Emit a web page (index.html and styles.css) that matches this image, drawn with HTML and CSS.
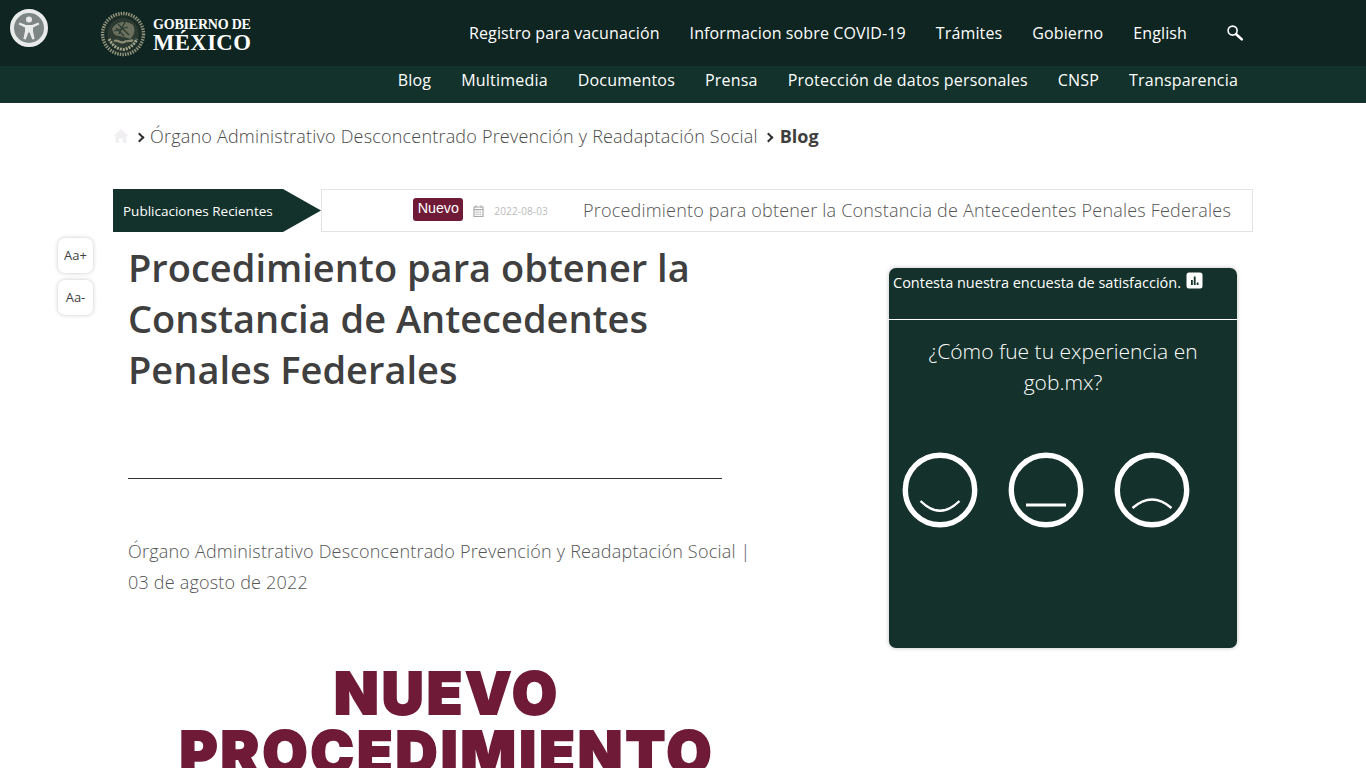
FILE: index.html
```html
<!DOCTYPE html>
<html lang="es">
<head>
    <meta charset="utf-8" />
    <title>Procedimiento para obtener la Constancia de Antecedentes Penales Federales</title>
    <link rel="stylesheet" href="styles.css">
</head>
<body>
<a class="accessBtn" href="#">
    <svg width="38" height="38" viewBox="0 0 38 38">
        <circle cx="19" cy="19" r="17" fill="#7d8684" stroke="#e9ebeb" stroke-width="4"/>
        <circle cx="19" cy="10.5" r="3" fill="#e9ebeb"/>
        <path d="M9.5 13.5 L16 16 H22 L28.5 13.5 L29.3 15.6 L23 18.6 V22 L24.6 30 L22.3 30.6 L19.6 23.5 H18.4 L15.7 30.6 L13.4 30 L15 22 V18.6 L8.7 15.6 Z" fill="#e9ebeb"/>
    </svg>
</a>

<header>
    <div class="topBar">
        <a class="logo" href="#">
            <svg class="emblem" width="46" height="46" viewBox="0 0 46 46">
                <circle cx="23" cy="23" r="20.5" fill="#1b2c27" stroke="#92947e" stroke-width="3.4" stroke-dasharray="1.5 1.1"/>
                <circle cx="23" cy="22.5" r="15.5" fill="#2c3a31"/>
                <path d="M12 18 C16 10 27 9 33 14 C36 19 34 25 30 28 C24 25 18 26 14 23 Z" fill="#6a705d"/>
                <path d="M18 13 L29 24 M25 11 L19 23 M14 20 L28 16 M16 17 L24 25" stroke="#2b3a30" stroke-width="1.3" fill="none"/>
                <path d="M9 28 C12 34 17 38 23 38.5 C29 38 34 34 37 28" fill="none" stroke="#a3a48c" stroke-width="3" stroke-dasharray="2 1"/>
                <path d="M14 30 C18 28 20 33 24 31 C27 29 30 31 33 29" fill="none" stroke="#8d8e78" stroke-width="2.2"/>
            </svg>
            <span class="logoText">
                <span class="logoSmall">GOBIERNO DE</span>
                <span class="logoBig">MÉXICO</span>
            </span>
        </a>
        <nav class="mainNav">
            <a href="#">Registro para vacunación</a>
            <a href="#">Informacion sobre COVID-19</a>
            <a href="#">Trámites</a>
            <a href="#">Gobierno</a>
            <a href="#">English</a>
            <a class="searchLink" href="#">
                <svg width="18" height="18" viewBox="0 0 18 18">
                    <circle cx="6.6" cy="6.6" r="4.5" fill="none" stroke="#fff" stroke-width="1.6"/>
                    <path d="M10.2 10.2 L15.8 15.4" stroke="#fff" stroke-width="2.6" stroke-linecap="round"/>
                </svg>
            </a>
        </nav>
    </div>
    <div class="subBar">
        <nav class="subNav">
            <a href="#">Blog</a>
            <a href="#">Multimedia</a>
            <a href="#">Documentos</a>
            <a href="#">Prensa</a>
            <a href="#">Protección de datos personales</a>
            <a href="#">CNSP</a>
            <a href="#">Transparencia</a>
        </nav>
    </div>
</header>

<div class="fontBtns">
    <button class="fontBtn">Aa+</button>
    <button class="fontBtn">Aa-</button>
</div>

<div class="container">
    <div class="breadcrumb">
        <svg class="homeIcon" width="16" height="16" viewBox="0 0 16 16">
            <path d="M8 1 L15.5 8 H13.5 V15 H9.8 V10.5 H6.2 V15 H2.5 V8 H0.5 Z" fill="#f1eff2"/>
        </svg>
        <span class="crumbSep"></span>
        <a href="#">Órgano Administrativo Desconcentrado Prevención y Readaptación Social</a>
        <span class="crumbSep"></span>
        <b>Blog</b>
    </div>

    <div class="ticker">
        <div class="tickerLabel">Publicaciones Recientes</div>
        <div class="tickerBody">
            <span class="badgeNew">Nuevo</span>
            <svg class="calIcon" width="11" height="12" viewBox="0 0 11 12">
                <path d="M1 2 H10 V11.5 H1 Z M1 4.5 H10" fill="none" stroke="#aaa" stroke-width="1.2"/>
                <path d="M3 0.5 V2.5 M8 0.5 V2.5" stroke="#aaa" stroke-width="1.4"/>
                <path d="M2.6 6 H8.6 M2.6 7.8 H8.6 M2.6 9.6 H8.6" stroke="#aaa" stroke-width="1" stroke-dasharray="1.2 0.8"/>
            </svg>
            <span class="tickerDate">2022-08-03</span>
            <a class="tickerTitle" href="#">Procedimiento para obtener la Constancia de Antecedentes Penales Federales</a>
        </div>
    </div>

    <div class="content">
        <main class="article">
            <h1>Procedimiento para obtener la Constancia de Antecedentes Penales Federales</h1>
            <hr class="titleRule">
            <p class="meta">Órgano Administrativo Desconcentrado Prevención y Readaptación Social | 03 de agosto de 2022</p>
            <div class="poster">
                <div>NUEVO</div>
                <div>PROCEDIMIENTO</div>
            </div>
        </main>
        <aside class="survey">
            <div class="surveyHead">
                Contesta nuestra encuesta de satisfacción.
                <svg class="chartIcon" width="17" height="17" viewBox="0 0 17 17">
                    <rect x="0.5" y="0.5" width="16" height="16" rx="2.5" fill="#fff"/>
                    <path d="M5 8 H6.8 V13 H5 Z M7.8 4.5 H9.6 V13 H7.8 Z M10.7 10.4 H12.5 V13 H10.7 Z" fill="#13322b"/>
                </svg>
            </div>
            <p class="surveyQuestion">¿Cómo fue tu experiencia en gob.mx?</p>
            <div class="faces">
                <svg width="76" height="76" viewBox="0 0 76 76">
                    <circle cx="38" cy="38" r="34.7" fill="none" stroke="#fff" stroke-width="5.4"/>
                    <path d="M18.5 49 Q38 68.4 57.5 49" fill="none" stroke="#fff" stroke-width="2.4"/>
                </svg>
                <svg width="76" height="76" viewBox="0 0 76 76">
                    <circle cx="38" cy="38" r="34.7" fill="none" stroke="#fff" stroke-width="5.4"/>
                    <path d="M18 53 H58" fill="none" stroke="#fff" stroke-width="3"/>
                </svg>
                <svg width="76" height="76" viewBox="0 0 76 76">
                    <circle cx="38" cy="38" r="34.7" fill="none" stroke="#fff" stroke-width="5.4"/>
                    <path d="M18.5 56 Q38 39 57.5 56" fill="none" stroke="#fff" stroke-width="2.4"/>
                </svg>
            </div>
        </aside>
    </div>
</div>
</body>
</html>
```

FILE: styles.css
```css
html, body {
    margin: 0; height: 768px; overflow: hidden;
}
body {
    font-family: "Open Sans", sans-serif; color: #3f3f3f; background-color: #fff;
}
a {
    color: inherit; text-decoration: none;
}
header {
    color: #fff;
}
.accessBtn {
    position: absolute; left: 10px; top: 9px; width: 38px; height: 38px;
}
.topBar {
    display: flex; align-items: center; height: 66px; background-color: #0f2521;
    padding-left: 100px;
}
.logo {
    display: flex; align-items: center; gap: 7px; margin-top: 1px;
}
.emblem {
    display: block;
}
.logoText {
    display: flex; flex-direction: column; margin-top: 2px; font-family: "Liberation Serif", serif; font-weight: bold;
}
.logoSmall {
    font-size: 14px; line-height: 15px; letter-spacing: -.2px; white-space: nowrap;
}
.logoBig {
    font-size: 22.7px; line-height: 21px; letter-spacing: .4px;
}
.mainNav, .subNav {
    display: flex; font-size: 16px; font-weight: 500; white-space: nowrap;
}
.mainNav {
    margin-left: auto; gap: 30px; align-items: center; padding-right: 122px; letter-spacing: .12px;
}
.searchLink {
    display: flex; margin-left: 9px;
}
.subBar {
    display: flex; justify-content: flex-end; height: 37px;
    background-color: #13322b; padding-right: 128px;
}
.subNav {
    gap: 30px; line-height: 28px; letter-spacing: .2px;
}
.fontBtns {
    position: absolute; left: 58px; top: 238px; display: flex; flex-direction: column; gap: 7px;
}
.fontBtn {
    width: 35px; height: 35px; padding: 0 0 2px; border: 0; border-radius: 7px; background-color: #fff;
    box-shadow: 0 0 4px rgba(0,0,0,.22); font-family: "Open Sans", sans-serif; font-size: 13px; color: #3f3f3f;
}
.container {
    width: 1140px; margin: 0 auto;
}
.breadcrumb {
    display: flex; align-items: center; height: 34px; margin-top: 16px;
    font-size: 18px; font-weight: 300; color: #4a4a4a; white-space: nowrap; letter-spacing: .2px;
}
.breadcrumb b {
    margin-left: 1px; font-weight: 700; color: #3f3f3f; letter-spacing: 0;
}
.crumbSep {
    width: 5px; height: 5px; margin: 3px 7px 0 7px; border-top: 2px solid #333; border-right: 2px solid #333;
    transform: rotate(45deg);
}
.homeIcon {
    display: block;
}
.ticker {
    display: flex; height: 43px; margin-top: 36px;
}
.tickerLabel {
    width: 198px; padding-left: 10px; background-color: #13322b; color: #fff;
    font-size: 13.5px; line-height: 44px;
    clip-path: polygon(0 0, 170px 0, 208px 50%, 170px 100%, 0 100%);
    flex: 0 0 auto; box-sizing: content-box;
}
.tickerBody {
    flex: 1; display: flex; align-items: center; justify-content: flex-end; gap: 0;
    border: 1px solid #e3e3e3; box-sizing: border-box; padding-right: 21px; white-space: nowrap;
}
.badgeNew {
    height: 23px; width: 50px; margin-top: -2px; background-color: #6f1a37; color: #fff; border-radius: 3px;
    font-family: "Liberation Sans", sans-serif; font-weight: 400; font-size: 14.3px; line-height: 21px; text-align: center;
}
.calIcon {
    margin-left: 10px;
}
.tickerDate {
    margin-left: 10px; font-size: 10px; color: #bbb; letter-spacing: .15px;
}
.tickerTitle {
    margin: -2px 0 0 35px; font-size: 18px; font-weight: 300; color: #555; letter-spacing: .2px;
}
.content {
    display: flex; align-items: flex-start;
}
.article {
    width: 640px; padding-left: 15px; flex: 0 0 auto;
}
h1 {
    margin: 10px 0 0; width: 600px; font-size: 38px; line-height: 51px; font-weight: 600; color: #3f3f3f;
}
.titleRule {
    width: 594px; height: 1px; margin: 83px 0 0; border: 0; background-color: #333;
}
.meta {
    margin: 57px 0 0; font-size: 18px; font-weight: 300; line-height: 31px; color: #555; width: 630px; letter-spacing: .2px;
}
.poster {
    width: 638px; margin-top: 66px; text-align: center; font-family: "Inter", sans-serif;
    font-weight: 900; font-size: 58px; line-height: 59px; color: #6f1a37; letter-spacing: 3.1px;
    -webkit-text-stroke: 1.8px #6f1a37;
}
.survey {
    width: 348px; height: 380px; margin: 36px 0 0 121px; box-sizing: border-box; border-radius: 7px;
    background-color: #14312b; color: #fff; box-shadow: 0 0 4px rgba(0,0,0,.25); flex: 0 0 auto;
}
.surveyHead {
    height: 47px; padding: 4px 0 0 4px; border-bottom: 1px solid #fff;
    font-size: 14.5px; line-height: 20px;
}
.chartIcon {
    vertical-align: -1px; margin-left: 1px;
}
.surveyQuestion {
    width: 290px; margin: 16px auto 0; text-align: center; font-size: 21px; font-weight: 300; line-height: 31px;
}
.faces {
    display: flex; gap: 30px; margin: 54px 0 0 13px;
}
```
